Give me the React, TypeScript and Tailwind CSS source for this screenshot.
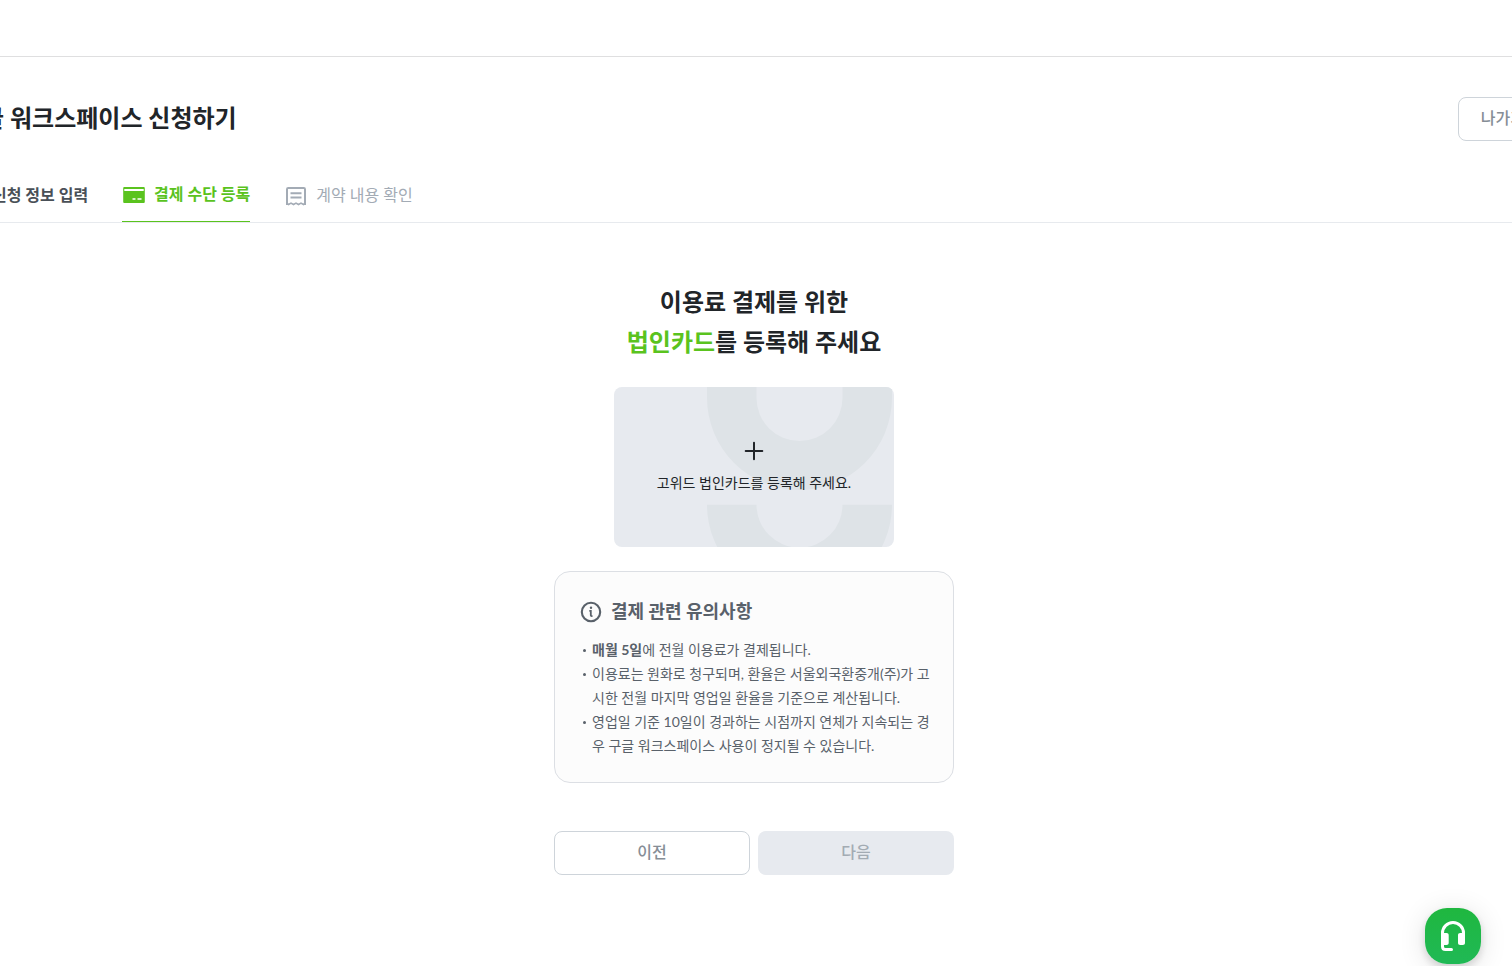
import React from "react";

function InfoFormIcon() {
  return (
    <svg width="24" height="24" viewBox="0 0 24 24" fill="none" stroke="currentColor" strokeWidth="2" aria-hidden="true">
      <rect x="4" y="3" width="16" height="18" rx="1" />
      <path d="M8 8h8M8 12h8M8 16h5" />
    </svg>
  );
}

function CardIcon() {
  return (
    <svg width="24" height="24" viewBox="0 0 24 24" aria-hidden="true">
      <path
        fill="currentColor"
        fillRule="evenodd"
        d="M2.5 4h19c.8 0 1.3.5 1.3 1.3v13.4c0 .8-.5 1.3-1.3 1.3h-19c-.8 0-1.3-.5-1.3-1.3V5.3c0-.8.5-1.3 1.3-1.3ZM2.3 6v2h19.400V6ZM10.5 15.2v1.600h3v-1.600ZM15.5 15.2v1.600h4v-1.600Z"
      />
    </svg>
  );
}

function ReceiptIcon() {
  return (
    <svg width="24" height="24" viewBox="0 0 24 24" fill="none" stroke="currentColor" strokeWidth="2" aria-hidden="true">
      <path d="M3 21V5.200C3 4.500 3.500 4 4.200 4h15.600c.7 0 1.200.5 1.200 1.200V21" />
      <path d="M2.500 19.300l2 1.200 2.500-1.400 2.500 1.400 2.500-1.400 2.500 1.400 2.500-1.400 2.500 1.400 2-1.200" strokeWidth="1.700" />
      <path d="M6.500 9.300h11M6.500 13.500h11" />
    </svg>
  );
}

function InfoIcon() {
  return (
    <svg width="24" height="24" viewBox="0 0 24 24" fill="none" stroke="currentColor" aria-hidden="true">
      <circle cx="12" cy="12" r="9.200" strokeWidth="2.100" />
      <path d="M10.300 10.800h1.500v4.500c0 .6.400.9 1 .9h.7" strokeWidth="1.800" />
      <circle cx="12" cy="7.800" r="1.200" fill="currentColor" stroke="none" />
    </svg>
  );
}

function HeadsetIcon() {
  return (
    <svg width="56" height="56" viewBox="0 0 56 56" fill="none" aria-hidden="true">
      <path d="M17.500 32v-7a10.500 10.500 0 0 1 21 0V32M17.500 32v6.500c0 1.700 1 3 3 3H26.500" stroke="#fff" strokeWidth="3" strokeLinecap="round" />
      <path d="M16 25h5.500c1.400 0 2.200.8 2.200 2.200v7.600c0 1.400-.8 2.200-2.200 2.200H16ZM40 25v9.800c0 1.400-.8 2.200-2.200 2.200h-2.600c-1.400 0-2.200-.8-2.200-2.200v-7.600c0-1.400.8-2.200 2.200-2.200Z" fill="#fff" />
    </svg>
  );
}

function CardPattern() {
  return (
    <svg className="absolute inset-0" width="280" height="160" viewBox="0 0 280 160" aria-hidden="true">
      <path
        fill="#dee3e7"
        d="M93 0h49.500v11a43 43 0 0 0 86 0V0H278v10.500a92.500 92.500 0 0 1-185 0ZM93 117.700h49.500a43 43 0 0 0 86 0H278a92.500 92.500 0 0 1-185 0Z"
      />
    </svg>
  );
}

const notices: React.ReactNode[] = [
  <>
    <strong className="font-bold">매월 5일</strong>에 전월 이용료가 결제됩니다.
  </>,
  "이용료는 원화로 청구되며, 환율은 서울외국환중개(주)가 고시한 전월 마지막 영업일 환율을 기준으로 계산됩니다.",
  "영업일 기준 10일이 경과하는 시점까지 연체가 지속되는 경우 구글 워크스페이스 사용이 정지될 수 있습니다.",
];

export default function App() {
  return (
    <div className="min-h-screen overflow-hidden bg-white pr-1 font-[Lato,'Noto_Sans_CJK_KR',sans-serif] text-[#212529]">
      <div className="-mr-1 h-[57px] border-b border-[#dfdfe0]" />

      <header className="-mx-10 flex items-center justify-between pt-10">
        <h1 className="pb-0.5 text-2xl leading-10 font-bold whitespace-nowrap">구글 워크스페이스 신청하기</h1>
        <button type="button" className="h-11 rounded-lg border border-[#ced4da] px-[22px] pb-0.5 text-base font-medium text-[#868e96]">
          나가기
        </button>
      </header>

      <nav className="-mx-10 mt-8 flex h-[50px] gap-[34px] border-b border-[#e7eaee] text-base whitespace-nowrap">
        <a href="#info" className="flex items-center gap-2 pb-1 font-bold text-[#495057]">
          <InfoFormIcon />
          <span className="pb-0.5">신청 정보 입력</span>
        </a>
        <a href="#payment" aria-current="step" className="flex items-center gap-2 border-b border-[#5ac31e] pb-1 font-bold text-[#5ac31e]">
          <CardIcon />
          <span className="pb-0.5">결제 수단 등록</span>
        </a>
        <a href="#contract" className="flex items-center gap-2 pb-1 text-[#a3abb5]">
          <ReceiptIcon />
          <span className="pb-0.5">계약 내용 확인</span>
        </a>
      </nav>

      <main className="mx-auto mt-[59px] flex w-full max-w-[400px] flex-col items-center">
        <h2 className="text-center text-2xl leading-10 font-bold">
          이용료 결제를 위한
          <br />
          <span className="text-[#5ac31e]">법인카드</span>를 등록해 주세요
        </h2>

        <button type="button" className="relative mt-[25px] h-40 w-[280px] overflow-hidden rounded-lg bg-[#e7eaef]">
          <CardPattern />
          <span className="relative flex flex-col items-center gap-2 text-sm leading-6">
            <svg width="24" height="24" viewBox="0 0 24 24" stroke="#212529" strokeWidth="2" strokeLinecap="round" aria-hidden="true">
              <path d="M12 3.700v16.600M3.700 12h16.600" />
            </svg>
            고위드 법인카드를 등록해 주세요.
          </span>
        </button>

        <section className="mt-6 w-full rounded-2xl border border-[#dcdfe4] bg-[#fcfcfc] py-6 pr-5 pl-6 text-[#59616a]">
          <h3 className="mb-2.5 flex h-8 items-center gap-2 text-lg font-bold">
            <InfoIcon />
            <span className="pb-0.5">결제 관련 유의사항</span>
          </h3>
          <ul className="text-sm leading-6">
            {notices.map((notice, i) => (
              <li key={i} className="flex break-all">
                <span className="flex h-6 w-[13px] shrink-0 items-center pl-1">
                  <span className="size-[3px] rounded-full bg-[#59616a]" />
                </span>
                <span>{notice}</span>
              </li>
            ))}
          </ul>
        </section>

        <div className="mt-12 grid w-full grid-cols-2 gap-2 text-base font-medium">
          <button type="button" className="h-11 rounded-lg border border-[#ced4da] pb-0.5 text-[#868e96]">
            이전
          </button>
          <button type="button" disabled className="h-11 rounded-lg bg-[#e7eaef] pb-0.5 text-[#a3abb3]">
            다음
          </button>
        </div>
      </main>

      <button
        type="button"
        aria-label="상담 문의"
        className="fixed right-[31px] bottom-0.5 size-14 rounded-[22px] bg-linear-to-b from-[#1fb73f] to-[#20b955] shadow-[0_4px_8px_rgba(0,0,0,0.14),0_4px_28px_rgba(0,0,0,0.12)]"
      >
        <HeadsetIcon />
      </button>
    </div>
  );
}
